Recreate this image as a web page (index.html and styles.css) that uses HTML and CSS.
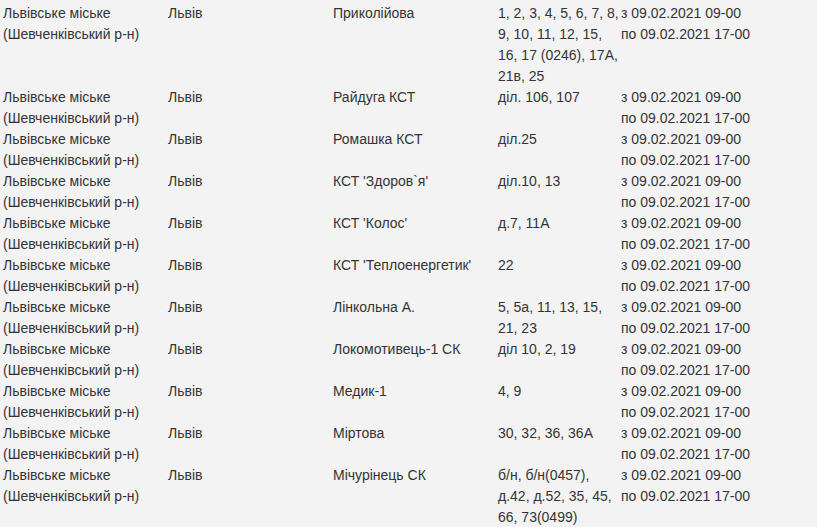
FILE: index.html
```html
<!DOCTYPE html>
<html lang="uk">
<head>
<meta charset="utf-8">
<title>Відключення</title>
<link rel="stylesheet" href="styles.css">
</head>
<body>
<table class="outages">
<colgroup>
<col class="c-org"><col class="c-city"><col class="c-street"><col class="c-houses"><col class="c-time">
</colgroup>
<tbody>
<tr><td>Львівське міське<br>(Шевченківський р-н)</td><td>Львів</td><td>Приколійова</td><td>1, 2, 3, 4, 5, 6, 7, 8, 9, 10, 11, 12, 15, 16, 17 (0246), 17А, 21в, 25</td><td>з 09.02.2021 09-00<br>по 09.02.2021 17-00</td></tr>
<tr><td>Львівське міське<br>(Шевченківський р-н)</td><td>Львів</td><td>Райдуга КСТ</td><td>діл. 106, 107</td><td>з 09.02.2021 09-00<br>по 09.02.2021 17-00</td></tr>
<tr><td>Львівське міське<br>(Шевченківський р-н)</td><td>Львів</td><td>Ромашка КСТ</td><td>діл.25</td><td>з 09.02.2021 09-00<br>по 09.02.2021 17-00</td></tr>
<tr><td>Львівське міське<br>(Шевченківський р-н)</td><td>Львів</td><td>КСТ 'Здоров`я'</td><td>діл.10, 13</td><td>з 09.02.2021 09-00<br>по 09.02.2021 17-00</td></tr>
<tr><td>Львівське міське<br>(Шевченківський р-н)</td><td>Львів</td><td>КСТ 'Колос'</td><td>д.7, 11А</td><td>з 09.02.2021 09-00<br>по 09.02.2021 17-00</td></tr>
<tr><td>Львівське міське<br>(Шевченківський р-н)</td><td>Львів</td><td>КСТ 'Теплоенергетик'</td><td>22</td><td>з 09.02.2021 09-00<br>по 09.02.2021 17-00</td></tr>
<tr><td>Львівське міське<br>(Шевченківський р-н)</td><td>Львів</td><td>Лінкольна А.</td><td>5, 5а, 11, 13, 15, 21, 23</td><td>з 09.02.2021 09-00<br>по 09.02.2021 17-00</td></tr>
<tr><td>Львівське міське<br>(Шевченківський р-н)</td><td>Львів</td><td>Локомотивець-1 СК</td><td>діл 10, 2, 19</td><td>з 09.02.2021 09-00<br>по 09.02.2021 17-00</td></tr>
<tr><td>Львівське міське<br>(Шевченківський р-н)</td><td>Львів</td><td>Медик-1</td><td>4, 9</td><td>з 09.02.2021 09-00<br>по 09.02.2021 17-00</td></tr>
<tr><td>Львівське міське<br>(Шевченківський р-н)</td><td>Львів</td><td>Міртова</td><td>30, 32, 36, 36А</td><td>з 09.02.2021 09-00<br>по 09.02.2021 17-00</td></tr>
<tr><td>Львівське міське<br>(Шевченківський р-н)</td><td>Львів</td><td>Мічурінець СК</td><td>б/н, б/н(0457), д.42, д.52, 35, 45, 66, 73(0499)</td><td>з 09.02.2021 09-00<br>по 09.02.2021 17-00</td></tr>
</tbody>
</table>
</body>
</html>
```
FILE: styles.css
```css
html, body {
  margin: 0;
  padding: 0;
  background: #f3f3f3;
}
body {
  font-family: "Liberation Sans", Arial, sans-serif;
  font-size: 14px;
  line-height: 21px;
  color: #333333;
}
.outages {
  margin: 3px 0 0 3px;
  border-collapse: collapse;
  table-layout: fixed;
  width: 814px;
}
.outages td {
  padding: 0;
  vertical-align: top;
}
.c-org { width: 165px; }
.c-city { width: 165px; }
.c-street { width: 165px; }
.c-houses { width: 123px; }
.c-time { width: 196px; }
```
